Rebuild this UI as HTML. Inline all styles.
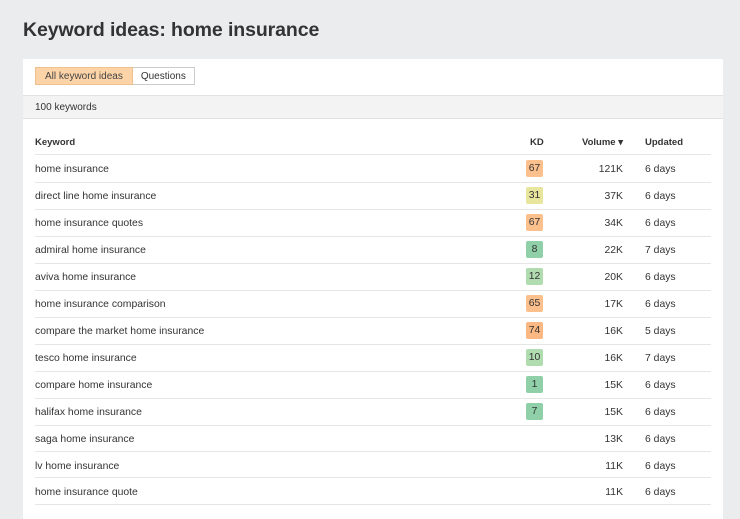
<!DOCTYPE html>
<html><head><style>
body{margin:0;width:740px;height:507px;background:#ebecee;font-family:"Liberation Sans",sans-serif;overflow:hidden;position:relative;color:#333}
h1{position:absolute;left:23px;top:19px;margin:0;font-size:19.5px;font-weight:bold;color:#333;letter-spacing:-0.1px}
.card{position:absolute;left:23px;top:59px;width:700px;height:460px;background:#fff}
.tabs{position:absolute;left:12px;top:8px;height:18px;display:flex;font-size:10px}
.tabs div{border:1px solid #ccc;padding:0 8px;line-height:17px}
.tabs .a{background:#fdd4a8;border-color:#f0c08e;color:#444;padding:0 9px}
.tabs .b{border-left:none}
.band{position:absolute;left:0;top:36px;width:700px;height:24px;background:#f3f3f3;border-top:1px solid #e2e2e2;border-bottom:1px solid #e2e2e2;font-size:10px;line-height:24px;padding-left:12px;box-sizing:border-box}
.row{position:absolute;left:12px;width:676px;border-bottom:1px solid #e6e6e6;font-size:10.4px;height:27px}
.row span{position:absolute;top:9px}
.k{left:0}.v{right:88px;text-align:right}.u{left:610px}
.kd{left:491px;width:17px;height:17px;top:5px!important;line-height:17px;text-align:center;border-radius:2px}
.h{font-weight:bold;font-size:9.5px}
</style></head><body>
<h1>Keyword ideas: home insurance</h1>
<div class="card">
<div class="tabs"><div class="a">All keyword ideas</div><div class="b">Questions</div></div>
<div class="band">100 keywords</div>
<div class="row h" style="top:68px"><span class="k" style="top:10px">Keyword</span><span style="left:495px;top:10px">KD</span><span class="v" style="top:10px">Volume ▾</span><span class="u" style="top:10px">Updated</span></div>
<div class="row" style="top:96px"><span class="k">home insurance</span><span class="kd" style="background:#fbc08c">67</span><span class="v">121K</span><span class="u">6 days</span></div>
<div class="row" style="top:123px"><span class="k">direct line home insurance</span><span class="kd" style="background:#e8e59c">31</span><span class="v">37K</span><span class="u">6 days</span></div>
<div class="row" style="top:150px"><span class="k">home insurance quotes</span><span class="kd" style="background:#fbc08c">67</span><span class="v">34K</span><span class="u">6 days</span></div>
<div class="row" style="top:177px"><span class="k">admiral home insurance</span><span class="kd" style="background:#8fd0a8">8</span><span class="v">22K</span><span class="u">7 days</span></div>
<div class="row" style="top:204px"><span class="k">aviva home insurance</span><span class="kd" style="background:#b0dcb0">12</span><span class="v">20K</span><span class="u">6 days</span></div>
<div class="row" style="top:231px"><span class="k">home insurance comparison</span><span class="kd" style="background:#fbc08c">65</span><span class="v">17K</span><span class="u">6 days</span></div>
<div class="row" style="top:258px"><span class="k">compare the market home insurance</span><span class="kd" style="background:#fbb882">74</span><span class="v">16K</span><span class="u">5 days</span></div>
<div class="row" style="top:285px"><span class="k">tesco home insurance</span><span class="kd" style="background:#b0dcb0">10</span><span class="v">16K</span><span class="u">7 days</span></div>
<div class="row" style="top:312px"><span class="k">compare home insurance</span><span class="kd" style="background:#8fd0a8">1</span><span class="v">15K</span><span class="u">6 days</span></div>
<div class="row" style="top:339px"><span class="k">halifax home insurance</span><span class="kd" style="background:#8fd0a8">7</span><span class="v">15K</span><span class="u">6 days</span></div>
<div class="row" style="top:366px;height:26px"><span class="k">saga home insurance</span><span class="v">13K</span><span class="u">6 days</span></div>
<div class="row" style="top:393px;height:25px"><span class="k">lv home insurance</span><span class="v">11K</span><span class="u">6 days</span></div>
<div class="row" style="top:419px;height:26px"><span class="k">home insurance quote</span><span class="v">11K</span><span class="u">6 days</span></div>
</div>
</body></html>
